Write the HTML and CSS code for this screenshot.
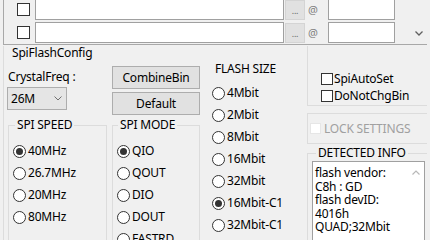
FILE: index.html
```html
<!DOCTYPE html>
<html lang="en">
<head>
    <meta charset="UTF-8">
    <meta name="viewport" content="width=device-width, initial-scale=1.0">
    <title>SpiFlashConfig</title>
    <link rel="stylesheet" href="styles.css">
</head>
<body>
    <div class="file-panel">
        <div class="file-rows">
            <div class="file-row">
                <span class="check"></span>
                <span class="path-input"></span>
                <span class="browse">...</span>
                <span class="at">@</span>
                <span class="addr-input"></span>
            </div>
            <div class="file-row">
                <span class="check"></span>
                <span class="path-input"></span>
                <span class="browse">...</span>
                <span class="at">@</span>
                <span class="addr-input"></span>
            </div>
        </div>
        <div class="panel-scroll">
            <svg width="8" height="5" viewBox="0 0 8 5"><path d="M0.5 0.5 L4 4 L7.5 0.5" fill="none" stroke="#606060" stroke-width="1.3"/></svg>
        </div>
    </div>

    <div class="config">
        <div class="config-title">SpiFlashConfig</div>
        <div class="config-cols">
            <div class="col col-left">
                <div class="field-label">CrystalFreq :</div>
                <div class="combo">
                    <span>26M</span>
                    <svg width="8" height="5" viewBox="0 0 8 5"><path d="M0.5 0.5 L4 4 L7.5 0.5" fill="none" stroke="#707070" stroke-width="1"/></svg>
                </div>
                <fieldset class="group">
                    <legend>SPI SPEED</legend>
                    <div class="radio-list">
                        <div class="radio"><span class="dot on"></span>40MHz</div>
                        <div class="radio"><span class="dot"></span>26.7MHz</div>
                        <div class="radio"><span class="dot"></span>20MHz</div>
                        <div class="radio"><span class="dot"></span>80MHz</div>
                    </div>
                </fieldset>
            </div>

            <div class="col col-mid">
                <div class="btn first">CombineBin</div>
                <div class="btn">Default</div>
                <fieldset class="group mode-group">
                    <legend>SPI MODE</legend>
                    <div class="radio-list">
                        <div class="radio"><span class="dot on"></span>QIO</div>
                        <div class="radio"><span class="dot"></span>QOUT</div>
                        <div class="radio"><span class="dot"></span>DIO</div>
                        <div class="radio"><span class="dot"></span>DOUT</div>
                        <div class="radio"><span class="dot"></span>FASTRD</div>
                    </div>
                </fieldset>
            </div>

            <div class="col col-flash">
                <div class="flash-title">FLASH SIZE</div>
                <div class="radio-list flash-list">
                    <div class="radio"><span class="dot"></span>4Mbit</div>
                    <div class="radio"><span class="dot"></span>2Mbit</div>
                    <div class="radio"><span class="dot"></span>8Mbit</div>
                    <div class="radio"><span class="dot"></span>16Mbit</div>
                    <div class="radio"><span class="dot"></span>32Mbit</div>
                    <div class="radio"><span class="dot on"></span>16Mbit-C1</div>
                    <div class="radio"><span class="dot"></span>32Mbit-C1</div>
                </div>
            </div>

            <div class="col col-right">
                <div class="option-box">
                    <div class="check-row"><span class="check small"></span>SpiAutoSet</div>
                    <div class="check-row"><span class="check small"></span>DoNotChgBin</div>
                </div>
                <div class="lock-box">
                    <span class="check disabled"></span>LOCK SETTINGS
                </div>
                <fieldset class="group detect-group">
                    <legend>DETECTED INFO</legend>
                    <div class="info-box">
                        <div class="info-text">
                            <div>flash vendor:</div>
                            <div>C8h : GD</div>
                            <div>flash devID:</div>
                            <div>4016h</div>
                            <div>QUAD;32Mbit</div>
                        </div>
                        <div class="info-scroll">
                            <svg width="8" height="5" viewBox="0 0 8 5"><path d="M0.5 4.5 L4 1 L7.5 4.5" fill="none" stroke="#b8b8b8" stroke-width="1.2"/></svg>
                        </div>
                    </div>
                </fieldset>
            </div>
        </div>
    </div>
</body>
</html>
```

FILE: styles.css
```css
body {
    margin: 0;
    width: 430px;
    height: 240px;
    overflow: hidden;
    background: #f0f0f0;
    color: #000;
    font-family: "Noto Sans", "Open Sans", sans-serif;
    font-size: 12px;
    line-height: 14px;
    letter-spacing: -0.2px;
}

/* file list panel */

.file-panel {
    display: flex;
    box-sizing: border-box;
    width: 424px;
    height: 45px;
    margin-left: 3px;
    border-left: 1px solid #a8a8a8;
    border-bottom: 1px solid #a8a8a8;
    overflow: hidden;
}

.file-rows {
    display: flex;
    flex-direction: column;
    gap: 2px;
    margin-top: -1px;
}

.file-row {
    display: flex;
    align-items: center;
    height: 21px;
}

.check {
    box-sizing: border-box;
    width: 13px;
    height: 13px;
    border: 1px solid #333;
    background: #fff;
    flex-shrink: 0;
}

.file-row .check {
    margin-left: 13px;
    margin-right: 5px;
}

.path-input,
.addr-input {
    box-sizing: border-box;
    height: 21px;
    background: #fff;
    border: 1px solid #a0a0a0;
}

.path-input {
    width: 249px;
    margin-right: 1px;
}

.browse {
    box-sizing: border-box;
    width: 20px;
    height: 20px;
    background: #e1e1e1;
    border: 1px solid #d4d4d4;
    color: #666;
    font-size: 9px;
    line-height: 20px;
    text-align: center;
}

.at {
    width: 10px;
    margin-left: 3px;
    color: #808080;
    font-size: 11px;
}

.addr-input {
    width: 67px;
    margin-left: 10px;
}

.panel-scroll {
    display: flex;
    align-items: flex-end;
    justify-content: center;
    width: 17px;
    margin-left: auto;
    padding-bottom: 8px;
}

/* config group */

.config {
    height: 195px;
    margin-left: 3px;
    border-left: 1px solid #dcdcdc;
}

.config-title {
    padding-left: 8px;
    margin-top: 1px;
}

.config-cols {
    display: flex;
}

.col-left {
    width: 100px;
    margin-left: 3px;
}

.col-mid {
    width: 88px;
    margin-left: 5px;
}

.col-flash {
    width: 100px;
    margin-left: 5px;
}

.col-right {
    width: 120px;
    margin-left: 2px;
}

.field-label {
    margin-top: 10px;
    padding-left: 1px;
}

.combo {
    display: flex;
    align-items: center;
    justify-content: space-between;
    box-sizing: border-box;
    width: 60px;
    height: 23px;
    margin-top: 3px;
    padding: 0 4px 0 3px;
    background: #e5e5e5;
    border: 1px solid #adadad;
}

.group {
    box-sizing: border-box;
    min-width: 0;
    height: 140px;
    margin: 8px 0 0 1px;
    padding: 0;
    border: 1px solid #dcdcdc;
    border-bottom: none;
}

.group legend {
    margin-left: 6px;
    padding: 0 2px;
}

.mode-group {
    margin: 3px 0 0 0;
}

.mode-group legend {
    margin-left: 5px;
}

.btn {
    box-sizing: border-box;
    height: 23px;
    margin-top: 3px;
    background: #e1e1e1;
    border: 1px solid #adadad;
    line-height: 21px;
    text-align: center;
}

.btn.first {
    margin-top: 6px;
}

.radio-list {
    padding: 8px 0 0 4px;
}

.radio {
    display: flex;
    align-items: center;
    height: 22px;
    white-space: nowrap;
}

.dot {
    position: relative;
    box-sizing: border-box;
    width: 13px;
    height: 13px;
    margin-right: 2px;
    border: 1px solid #333;
    border-radius: 50%;
    background: #fff;
    flex-shrink: 0;
}

.dot.on::after {
    content: "";
    position: absolute;
    left: 2px;
    top: 2px;
    width: 7px;
    height: 7px;
    border-radius: 50%;
    background: #333;
}

.flash-title {
    margin-top: 2px;
    padding-left: 10px;
}

.flash-list {
    margin-top: 6px;
    padding: 0 0 0 7px;
}

/* right column */

.option-box {
    box-sizing: border-box;
    height: 60px;
    margin-top: -14px;
    padding: 24px 0 0 13px;
    border: 1px solid #dcdcdc;
    border-top: none;
    border-right: none;
}

.check-row {
    display: flex;
    align-items: center;
    height: 17px;
}

.check.small {
    width: 12px;
    height: 12px;
    margin-right: 1px;
}

.lock-box {
    display: flex;
    align-items: center;
    box-sizing: border-box;
    height: 31px;
    margin-top: 7px;
    padding-left: 2px;
    border: 1px solid #dcdcdc;
    border-right: none;
    color: #a0a0a0;
}

.check.disabled {
    width: 11px;
    height: 11px;
    margin-right: 3px;
    border-color: #e6e6e6;
}

.detect-group {
    margin: 2px 0 0 0;
    border-right: none;
}

.detect-group legend {
    margin-left: 8px;
}

.info-box {
    display: flex;
    box-sizing: border-box;
    width: 113px;
    height: 90px;
    margin: 1px 0 0 4px;
    background: #fff;
    border: 1px solid #a0a0a0;
}

.info-text {
    flex: 1;
    padding: 4px 0 0 2px;
    line-height: 13.5px;
}

.info-scroll {
    display: flex;
    justify-content: center;
    width: 17px;
    padding-top: 8px;
}
```
